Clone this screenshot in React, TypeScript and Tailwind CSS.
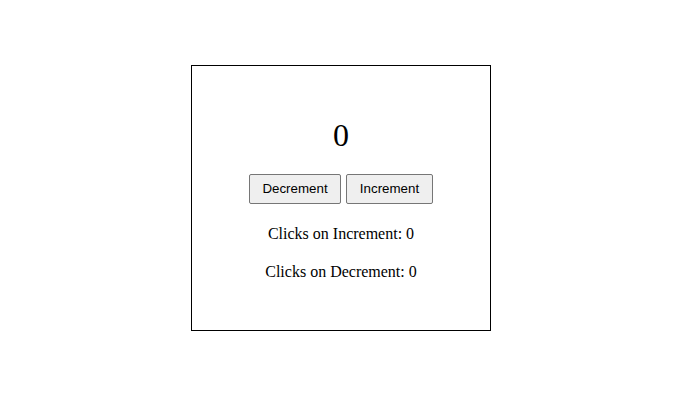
import React, { useState } from 'react';

const App: React.FC = () => {
    const [count, setCount] = useState(0);
    const [incClicks, setIncClicks] = useState(0);
    const [decClicks, setDecClicks] = useState(0);

    return (
        <div className="w-[680px] h-[412px] bg-white pt-[65px] pl-[191px] font-['Liberation_Serif','Times_New_Roman',serif] text-black">
            <div className="w-[300px] h-[266px] border border-black pt-[51px] text-center">
                <h1 className="text-[32px] leading-[36px] font-normal">{count}</h1>
                <div className="mt-[21px] flex justify-center gap-[5px] font-['Liberation_Sans',Arial,sans-serif] text-[13.333px]">
                    <button
                        className="w-[92px] h-[30px] bg-[#efefef] border border-[#767676] rounded-[2px] text-black"
                        onClick={() => {
                            setCount(count - 1);
                            setDecClicks(decClicks + 1);
                        }}
                    >
                        Decrement
                    </button>
                    <button
                        className="w-[87px] h-[30px] bg-[#efefef] border border-[#767676] rounded-[2px] text-black"
                        onClick={() => {
                            setCount(count + 1);
                            setIncClicks(incClicks + 1);
                        }}
                    >
                        Increment
                    </button>
                </div>
                <p className="mt-[21px] text-[16px] leading-[18px]">Clicks on Increment: {incClicks}</p>
                <p className="mt-[20px] text-[16px] leading-[18px]">Clicks on Decrement: {decClicks}</p>
            </div>
        </div>
    );
};

export default App;
